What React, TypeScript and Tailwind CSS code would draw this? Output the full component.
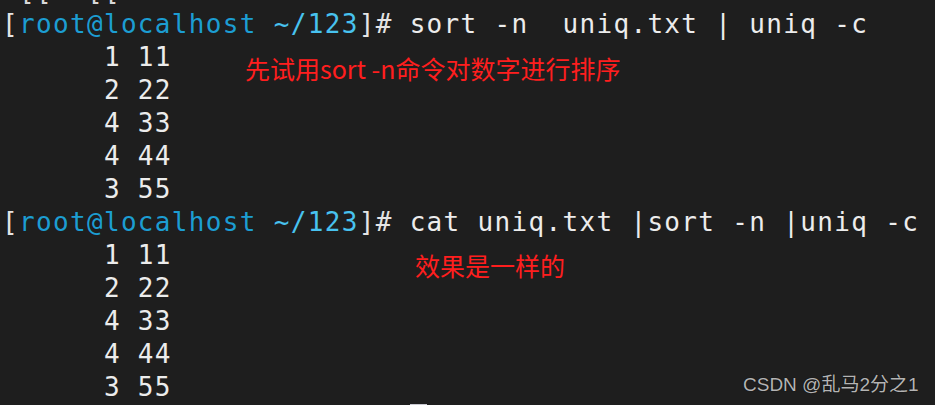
import React from "react";

const Prompt = () => (
  <>
    <span className="text-[#e4e4e4]">[</span>
    <span className="text-[#1c9dd2]">root@localhost</span>{" "}
    <span className="text-[#48c2ef]">~/123</span>
    <span className="text-[#e4e4e4]">]# </span>
  </>
);

const output = ["      1 11", "      2 22", "      4 33", "      4 44", "      3 55"];

const App = () => {
  return (
    <div className="relative w-[935px] h-[405px] overflow-hidden bg-[#1e1e1e]">
      {/* terminal buffer */}
      <div className="-mt-[25px] pl-[2px] font-['DejaVu_Sans_Mono',monospace] text-[26px] leading-[33px] tracking-[1.33px] whitespace-pre text-[#ececec]">
        <div className="text-[#d8d8d8]"> [[  [[</div>
        <div>
          <Prompt />
          sort -n  uniq.txt | uniq -c
        </div>
        {output.map((line, i) => (
          <div key={"a" + i}>{line}</div>
        ))}
        <div>
          <Prompt />
          cat uniq.txt |sort -n |uniq -c
        </div>
        {output.map((line, i) => (
          <div key={"b" + i}>{line}</div>
        ))}
        <div className="flex">
          <span className="text-transparent">
            <Prompt />
          </span>
          <span className="inline-block w-[17px] h-[33px] bg-[#c8c8d0]" />
        </div>
      </div>

      {/* annotations */}
      <div className="absolute left-[245px] top-[52px] font-['Noto_Sans_CJK_SC',sans-serif] text-[25px] leading-[33px] text-[#ff1e1e]">
        先试用sort -n命令对数字进行排序
      </div>
      <div className="absolute left-[415px] top-[249px] font-['Noto_Sans_CJK_SC',sans-serif] text-[25px] leading-[33px] text-[#ff1e1e]">
        效果是一样的
      </div>
      <div className="absolute left-[743px] top-[372px] font-['Liberation_Sans','Noto_Sans_CJK_SC',sans-serif] text-[19px] leading-[26px] text-[#b4b4b4] [text-shadow:0_0_1px_#000]">
        CSDN @乱马2分之1
      </div>
    </div>
  );
};

export default App;
